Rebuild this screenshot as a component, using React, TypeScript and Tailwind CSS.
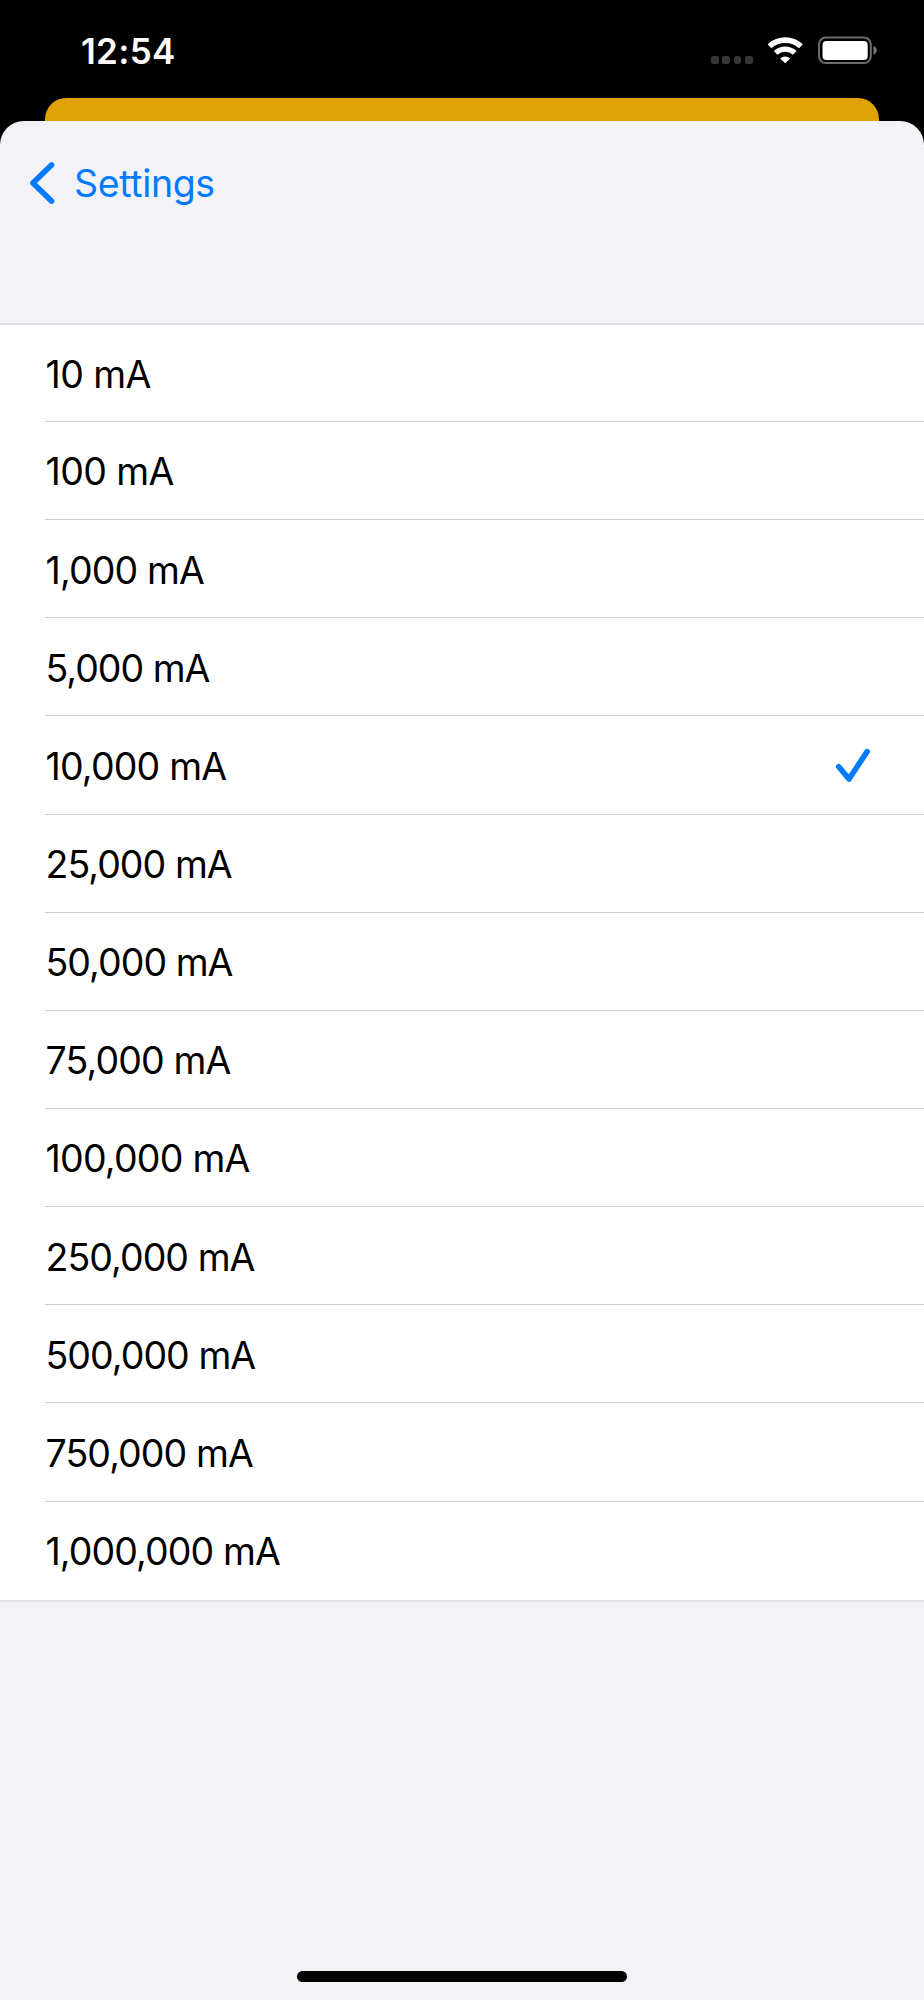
import { useState } from "react";

const limits = [
  { value: 10, label: "10 mA", spacing: "tracking-[-0.6px]" },
  { value: 100, label: "100 mA", spacing: "tracking-[-0.6px]" },
  { value: 1000, label: "1,000 mA", spacing: "tracking-[-0.85px]" },
  { value: 5000, label: "5,000 mA", spacing: "tracking-[-1px]" },
  { value: 10000, label: "10,000 mA", spacing: "tracking-[-0.8px]" },
  { value: 25000, label: "25,000 mA", spacing: "tracking-[-0.95px]" },
  { value: 50000, label: "50,000 mA", spacing: "tracking-[-0.95px]" },
  { value: 75000, label: "75,000 mA", spacing: "tracking-[-0.85px]" },
  { value: 100000, label: "100,000 mA", spacing: "tracking-[-0.75px]" },
  { value: 250000, label: "250,000 mA", spacing: "tracking-[-0.95px]" },
  { value: 500000, label: "500,000 mA", spacing: "tracking-[-0.95px]" },
  { value: 750000, label: "750,000 mA", spacing: "tracking-[-0.9px]" },
  { value: 1000000, label: "1,000,000 mA", spacing: "tracking-[-0.9px]" },
];

function StatusBar() {
  return (
    <div className="flex h-[98px] items-start justify-between pr-[46.500px] pl-[81px] text-white">
      <span className="pt-[28px] text-[35px] leading-[46px] font-semibold tracking-[0.3px]">
        12:54
      </span>
      <div className="flex pt-[36px]">
        {/* No signal */}
        <div className="mt-[20px] mr-[15px] flex gap-[3.4px]">
          <span className="h-[7.5px] w-[7.8px] rounded-[2.5px] bg-[#363636]" />
          <span className="h-[7.5px] w-[7.8px] rounded-[2.5px] bg-[#363636]" />
          <span className="h-[7.5px] w-[7.8px] rounded-[2.5px] bg-[#363636]" />
          <span className="h-[7.5px] w-[7.8px] rounded-[2.5px] bg-[#363636]" />
        </div>
        {/* Wifi */}
        <svg className="mr-[14px]" width="36" height="29" viewBox="0 0 36 29" fill="none">
          <path d="M1.500 10.300a23 23 0 0 1 31.400 0" stroke="white" strokeWidth="5.6" />
          <path d="M7.600 16.900a14 14 0 0 1 19.200 0" stroke="white" strokeWidth="5.2" />
          <path d="M12.200 22.400a7.800 7.800 0 0 1 10 0L17.200 27.300z" fill="white" />
        </svg>
        {/* Battery */}
        <svg width="60" height="29" viewBox="0 0 60 29" fill="none">
          <rect x="1" y="1.5" width="51.800" height="25.600" rx="6.8" stroke="#6b6b6b" strokeWidth="2" />
          <rect x="4.500" y="5" width="45.200" height="19" rx="4" fill="white" />
          <path d="M55.5 10c2 .6 3.2 2.200 3.200 4.300s-1.200 3.700-3.200 4.300z" fill="#7a7a7a" />
        </svg>
      </div>
    </div>
  );
}

export default function App() {
  const [selected, setSelected] = useState(10000);

  return (
    <main className="flex h-[2000px] w-[924px] flex-col overflow-hidden bg-black font-['Inter',sans-serif]">
      <StatusBar />
      <div className="mx-[45px] h-[45px] shrink-0 rounded-t-[21px] bg-[#e0a205]" />
      <section className="-mt-[22px] flex grow flex-col rounded-t-[24px] bg-[#f2f2f7]">
        <header className="h-[202px]">
          <button className="ml-[29px] flex items-center pt-[38px] text-[#007aff]">
            <svg width="28" height="48" viewBox="0 0 28 48" fill="none">
              <path
                d="M22.500 5.900L3.900 24.100l18.600 18"
                stroke="currentColor"
                strokeWidth="5.6"
                strokeLinecap="round"
                strokeLinejoin="round"
              />
            </svg>
            <span className="ml-[17px] pt-[2px] text-[37.5px] leading-[46px] tracking-[-0.35px]">
              Settings
            </span>
          </button>
        </header>

        <ul className="border-y-2 border-[#e1e1e5] bg-white">
          {limits.map((limit, i) => (
            <li key={limit.value} className="pl-[45px]">
              <button
                onClick={() => setSelected(limit.value)}
                className={`flex w-full items-center justify-between pr-[53px] text-left text-[37.5px] text-black ${
                  i === 0 ? "h-[97px]" : "h-[98.150px]"
                } ${i < limits.length - 1 ? "border-b border-[#cfcfd1]" : ""}`}
              >
                <span className={`pt-[4px] pl-[0.5px] ${limit.spacing}`}>{limit.label}</span>
                {selected === limit.value && (
                  <svg className="mt-px" width="36" height="36" viewBox="0 0 36 36" fill="none">
                    <path
                      d="M3.800 19.700L14 32L32.100 4.600"
                      stroke="#007aff"
                      strokeWidth="5.6"
                      strokeLinecap="round"
                      strokeLinejoin="round"
                    />
                  </svg>
                )}
              </button>
            </li>
          ))}
        </ul>

        <div className="mx-auto mt-auto mb-[18px] h-[11px] w-[330px] rounded-full bg-black" />
      </section>
    </main>
  );
}
